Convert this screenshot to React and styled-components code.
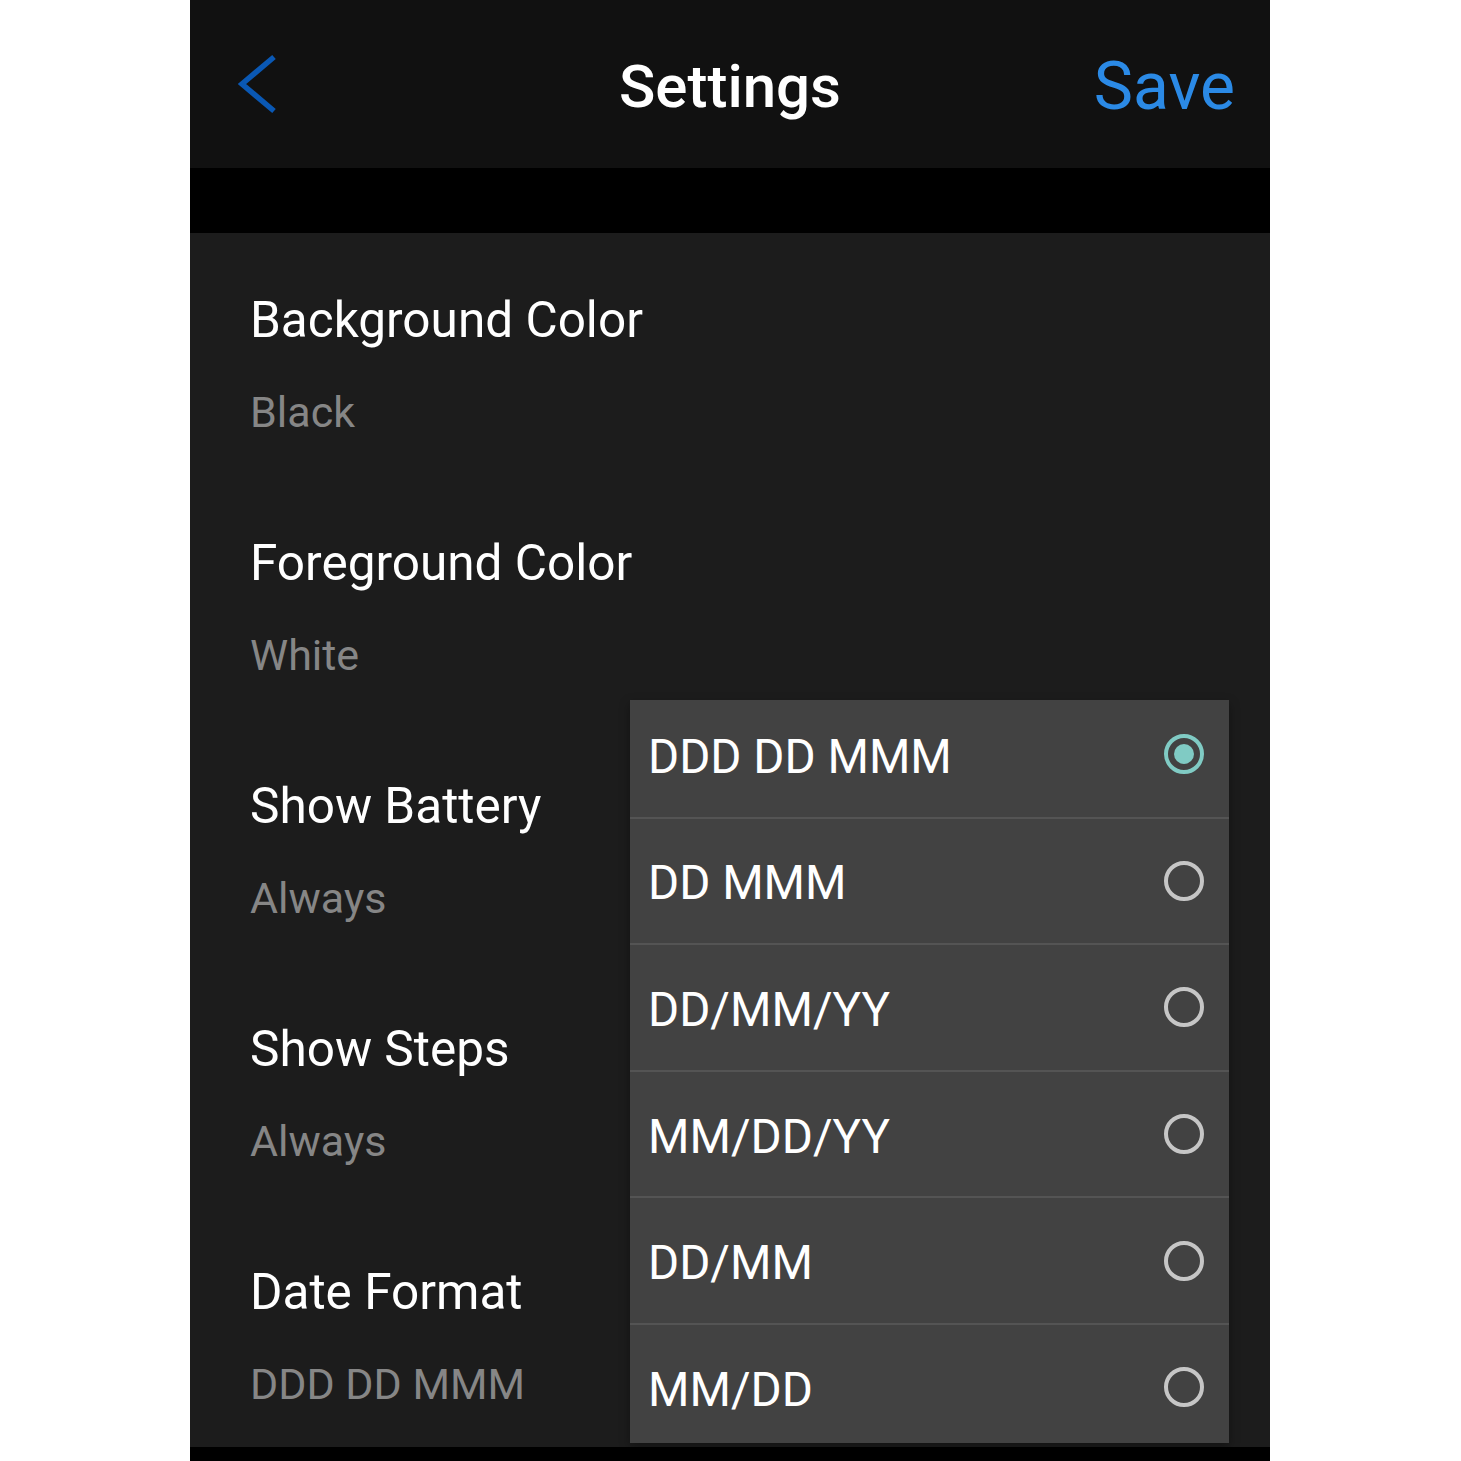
import React from 'react';
import styled, { createGlobalStyle } from 'styled-components';

const GlobalStyle = createGlobalStyle`
    html, body {
        margin: 0;
        padding: 0;
        background: #ffffff;
    }
    body {
        font-family: Roboto, "Noto Sans", "Liberation Sans", sans-serif;
    }
`

const Page = styled.div`
    display: flex;
    width: 100%;
    height: 1461px;
    overflow: hidden;
`

const Phone = styled.div`
    margin-left: 190px;
    width: 1080px;
    height: 1461px;
    background: #000;
    display: flex;
    flex-direction: column;
`

const Header = styled.header`
    height: 168px;
    flex-shrink: 0;
    background: #111111;
    display: grid;
    grid-template-columns: 1fr auto 1fr;
    align-items: center;
    padding: 0 35px;
    box-sizing: border-box;
`

const BackButton = styled.button`
    justify-self: start;
    margin-left: 11px;
    background: none;
    border: none;
    padding: 0;
    display: flex;
    cursor: pointer;
`

const Title = styled.h1`
    margin: 0;
    padding-top: 5px;
    font-size: 60px;
    line-height: 64px;
    font-weight: 500;
    color: #ffffff;
`

const SaveButton = styled.button`
    justify-self: end;
    background: none;
    border: none;
    padding: 5px 0 0;
    font-family: inherit;
    font-size: 66px;
    line-height: 64px;
    color: #2b8ae6;
    cursor: pointer;
`

const Spacer = styled.div`
    height: 65px;
    flex-shrink: 0;
    background: #000;
`

const Panel = styled.main`
    position: relative;
    height: 1214px;
    flex-shrink: 0;
    background: #1c1c1c;
    padding-left: 60px;
    box-sizing: border-box;
`

const Item = styled.div`
    padding: 55px 0 36px;
`

const ItemTitle = styled.div`
    font-size: 49.5px;
    line-height: 64px;
    color: #ffffff;
`

const ItemValue = styled.div`
    margin-top: 32px;
    font-size: 43px;
    line-height: 56px;
    color: #868686;
`

const Menu = styled.div`
    position: absolute;
    left: 440px;
    top: 467px;
    width: 599px;
    height: 743px;
    background: #424242;
    overflow: hidden;
    box-shadow: 0 4px 10px rgba(0, 0, 0, .35);
`

const MenuList = styled.ul`
    list-style: none;
    margin: -8px 0 0;
    padding: 0;
`

const Option = styled.li`
    height: 126.6px;
    box-sizing: border-box;
    display: flex;
    align-items: center;
    justify-content: space-between;
    padding: 0 23px 0 18px;
    border-bottom: 2px solid ${p => p.$last ? 'transparent' : '#545454'};
    font-size: 47.5px;
    color: #ffffff;
`

const OptionLabel = styled.span`
    padding-top: 5px;
`

const Chevron = () => (
    <svg width="44" height="64" viewBox="0 0 44 64">
        <polyline points="38,5 6,32 38,59" fill="none" stroke="#0a58b4" strokeWidth="5.5" />
    </svg>
)

const Radio = ({ checked }) => (
    <svg width="44" height="44" viewBox="0 0 44 44">
        <circle cx="22" cy="22" r="18" fill="none" stroke={checked ? '#80cbc4' : '#c6c6c6'} strokeWidth="4" />
        {checked && <circle cx="22" cy="22" r="10" fill="#80cbc4" />}
    </svg>
)

const settings = [
    { title: 'Background Color', value: 'Black' },
    { title: 'Foreground Color', value: 'White' },
    { title: 'Show Battery', value: 'Always' },
    { title: 'Show Steps', value: 'Always' },
    { title: 'Date Format', value: 'DDD DD MMM' },
]

const formats = ['DDD DD MMM', 'DD MMM', 'DD/MM/YY', 'MM/DD/YY', 'DD/MM', 'MM/DD']

const App = () => {
    return (
        <Page>
            <GlobalStyle />
            <Phone>
                <Header>
                    <BackButton aria-label="Back"><Chevron /></BackButton>
                    <Title>Settings</Title>
                    <SaveButton>Save</SaveButton>
                </Header>
                <Spacer />
                <Panel>
                    {settings.map(s => (
                        <Item key={s.title}>
                            <ItemTitle>{s.title}</ItemTitle>
                            <ItemValue>{s.value}</ItemValue>
                        </Item>
                    ))}
                    <Menu>
                        <MenuList>
                            {formats.map((f, i) => (
                                <Option key={f} $last={i === formats.length - 1}>
                                    <OptionLabel>{f}</OptionLabel>
                                    <Radio checked={i === 0} />
                                </Option>
                            ))}
                        </MenuList>
                    </Menu>
                </Panel>
            </Phone>
        </Page>
    );
}

export default App;
